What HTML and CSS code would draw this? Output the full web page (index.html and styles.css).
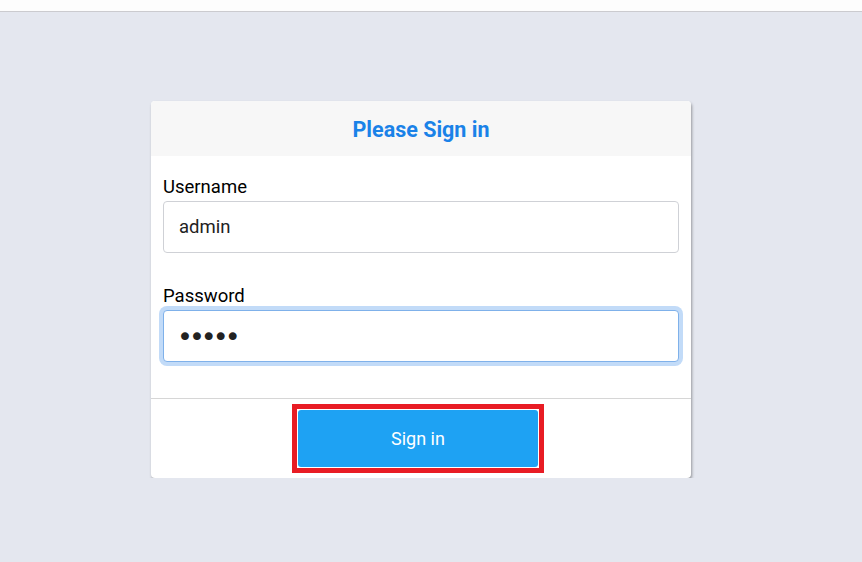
FILE: index.html
```html
<!DOCTYPE html>
<html lang="en">
<head>
  <meta charset="UTF-8">
  <title>Sign in</title>
  <link rel="stylesheet" href="styles.css">
</head>
<body>

<div class="topbar"></div>

<div class="page">
  <div class="login-card">
    <div class="login-header">
      <h2>Please Sign in</h2>
    </div>
    <div class="login-body">
      <label for="username">Username</label>
      <input type="text" id="username" value="admin">
      <label for="password">Password</label>
      <input type="password" id="password" class="focused" value="admin">
    </div>
    <div class="login-footer">
      <span class="highlight">
        <button>Sign in</button>
      </span>
    </div>
  </div>
</div>

</body>
</html>
```

FILE: styles.css
```css
body {
  margin: 0;
  font-family: Roboto, 'Liberation Sans', sans-serif;
  background-color: #e4e7ef;
  color: #111;
}

.topbar {
  height: 11px;
  background: #fdfdfd;
  border-bottom: 1px solid #cbcbcf;
}

.page {
  padding: 89px 20px 0 0;
}

.login-card {
  width: 540px;
  margin: 0 auto;
  background: #fff;
  border-radius: 4px;
  box-shadow: 1px 2px 3px rgba(0, 0, 0, 0.35);
  overflow: hidden;
}

.login-header {
  background: #f7f7f7;
  height: 55px;
  box-sizing: border-box;
  padding-top: 2px;
  display: flex;
  align-items: center;
  justify-content: center;
}

.login-header h2 {
  margin: 0;
  font-size: 21.5px;
  font-weight: 700;
  color: #1a82e8;
}

.login-body {
  padding: 20px 12px 36px;
  display: flex;
  flex-direction: column;
}

.login-body label {
  font-size: 18.5px;
  line-height: 22px;
  margin-bottom: 3px;
  color: #000;
}

.login-body input {
  height: 52px;
  box-sizing: border-box;
  border: 1px solid #cfd1d6;
  border-radius: 4px;
  padding: 0 15px;
  font-family: inherit;
  font-size: 18.5px;
  color: #222;
  margin-bottom: 32px;
  outline: none;
}

.login-body input:last-child {
  margin-bottom: 0;
}

.login-body input.focused {
  border-color: #7fb1ea;
  box-shadow: 0 0 0 4px #c2dbf8;
  font-family: 'DejaVu Sans', sans-serif;
  font-size: 27px;
  letter-spacing: -4px;
  padding-left: 13px;
}

.login-footer {
  border-top: 1px solid #d6d6d6;
  height: 79px;
  display: flex;
  align-items: center;
  justify-content: center;
  padding-right: 6px;
}

.highlight {
  display: block;
  border: 5px solid #e81c24;
  padding: 1px;
  background: #fff;
}

.highlight button {
  display: block;
  width: 240px;
  height: 57px;
  background: #1ea2f3;
  color: #fff;
  border: none;
  border-radius: 3px;
  font-family: Roboto, 'Liberation Sans', sans-serif;
  font-size: 18px;
}
```
